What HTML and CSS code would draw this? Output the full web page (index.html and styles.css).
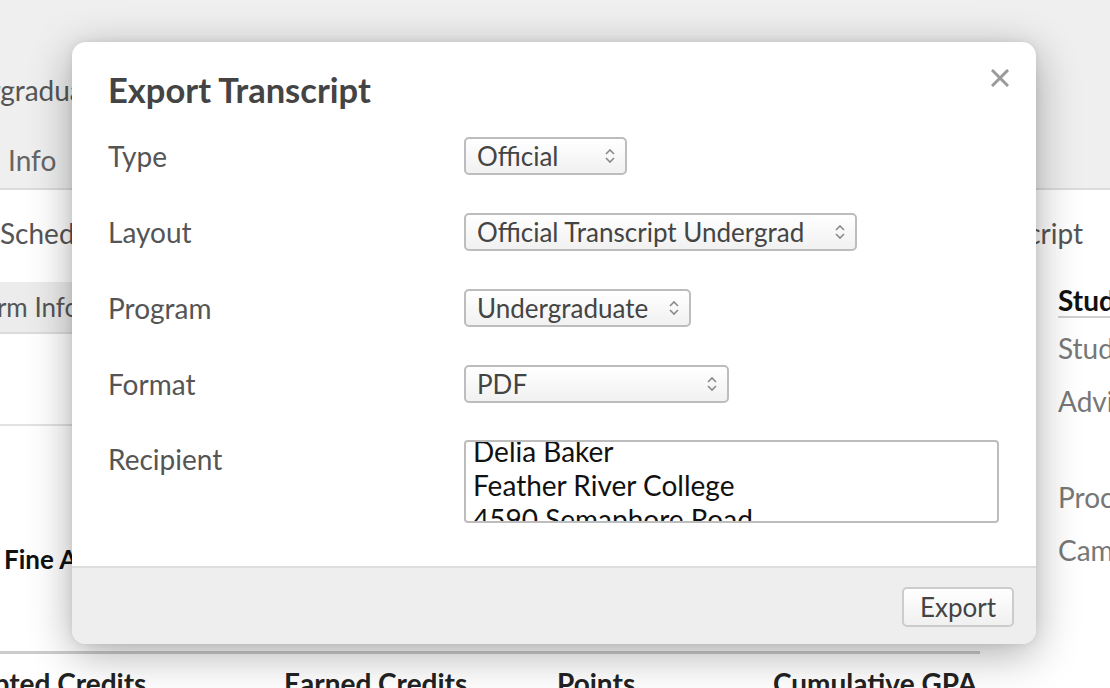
FILE: index.html
```html
<!DOCTYPE html>
<html>
<head>
<meta charset="utf-8">
<link rel="stylesheet" href="styles.css">
</head>
<body>
<div class="page">
  <header class="topbar">
    <div class="program-name">Undergraduate Program</div>
    <nav class="tabs"><span class="tab">Info</span></nav>
  </header>
  <nav class="subnav">
    <span class="subnav-item">Schedule</span>
    <span class="subnav-item">Transcript</span>
  </nav>
  <div class="content">
    <main class="main">
      <div class="term-strip"><span class="term-label">Term Info</span></div>
      <div class="term-body"></div>
      <div class="course">
        <h3 class="course-title">Fine Arts</h3>
      </div>
      <div class="stats">
        <span class="stat stat-first">Attempted Credits</span>
        <span class="stat stat-earned">Earned Credits</span>
        <span class="stat stat-points">Points</span>
        <span class="stat stat-gpa">Cumulative GPA</span>
      </div>
    </main>
    <aside class="sidebar">
      <h3 class="side-heading">Student</h3>
      <div class="side-row">Student ID</div>
      <div class="side-row">Advisor</div>
      <div class="side-row side-gap">Process Date</div>
      <div class="side-row">Campus</div>
    </aside>
  </div>

  <div class="modal">
    <div class="modal-body">
      <button class="close" aria-label="Close">
        <svg width="18" height="18" viewBox="0 0 18 18"><path d="M2 2 L16 16 M16 2 L2 16" stroke="#9a9a9a" stroke-width="3" stroke-linecap="square"/></svg>
      </button>
      <h2 class="modal-title">Export Transcript</h2>
      <div class="form">
        <div class="form-row">
          <label class="form-label">Type</label>
          <div class="select w-type"><span>Official</span><svg class="chev" width="12" height="20" viewBox="0 0 12 20"><path d="M2 8 L6 4 L10 8 M2 12 L6 16 L10 12" fill="none" stroke="#8a8a8a" stroke-width="1.6"/></svg></div>
        </div>
        <div class="form-row">
          <label class="form-label">Layout</label>
          <div class="select w-layout"><span>Official Transcript Undergrad</span><svg class="chev" width="12" height="20" viewBox="0 0 12 20"><path d="M2 8 L6 4 L10 8 M2 12 L6 16 L10 12" fill="none" stroke="#8a8a8a" stroke-width="1.6"/></svg></div>
        </div>
        <div class="form-row">
          <label class="form-label">Program</label>
          <div class="select w-program"><span>Undergraduate</span><svg class="chev" width="12" height="20" viewBox="0 0 12 20"><path d="M2 8 L6 4 L10 8 M2 12 L6 16 L10 12" fill="none" stroke="#8a8a8a" stroke-width="1.6"/></svg></div>
        </div>
        <div class="form-row">
          <label class="form-label">Format</label>
          <div class="select w-format"><span>PDF</span><svg class="chev" width="12" height="20" viewBox="0 0 12 20"><path d="M2 8 L6 4 L10 8 M2 12 L6 16 L10 12" fill="none" stroke="#8a8a8a" stroke-width="1.6"/></svg></div>
        </div>
        <div class="form-row form-row-top">
          <label class="form-label label-recipient">Recipient</label>
          <div class="textarea">
            <div class="textarea-inner">
              <div>Delia Baker</div>
              <div>Feather River College</div>
              <div>4590 Semaphore Road</div>
              <div>Quincy, CA 95971</div>
            </div>
          </div>
        </div>
      </div>
    </div>
    <div class="modal-footer">
      <button class="btn">Export</button>
    </div>
  </div>
</div>
</body>
</html>
```

FILE: styles.css
```css
* { box-sizing: border-box; }
html, body { margin: 0; padding: 0; }
body {
  font-family: Lato, "Open Sans", "Liberation Sans", sans-serif;
  background: #fff;
  color: #555;
}
.page {
  position: relative;
  width: 1110px;
  height: 688px;
  overflow: hidden;
  background: #fff;
}

/* background page */
.topbar {
  height: 190px;
  background: #efefef;
  border-bottom: 2px solid #dcdcdc;
  display: flex;
  flex-direction: column;
}
.program-name {
  font-size: 28px;
  line-height: 32px;
  color: #555;
  margin-top: 74px;
  margin-left: -76px;
  white-space: nowrap;
}
.tabs {
  display: flex;
  margin-top: 38px;
}
.tab {
  font-size: 28px;
  line-height: 32px;
  color: #666;
  padding-left: 8px;
}
.subnav {
  height: 92px;
  display: flex;
  justify-content: space-between;
  padding-top: 27px;
  padding-right: 27px;
}
.subnav-item {
  font-size: 28px;
  line-height: 32px;
  color: #555;
  white-space: nowrap;
}
.content {
  display: grid;
  grid-template-columns: 980px 1fr;
  column-gap: 78px;
}
.term-strip {
  height: 52px;
  background: #ececec;
  border-bottom: 2px solid #dcdcdc;
  overflow: hidden;
}
.term-label {
  display: block;
  font-size: 26px;
  line-height: 50px;
  color: #555;
  margin-left: -29px;
  white-space: nowrap;
}
.term-body {
  height: 92px;
  border-bottom: 2px solid #e2e2e2;
}
.course {
  height: 228px;
  border-bottom: 3px solid #cccccc;
  padding-top: 118px;
}
.course-title {
  margin: 0;
  font-size: 26px;
  line-height: 30px;
  font-weight: 700;
  color: #111;
  padding-left: 4px;
}
.stats {
  display: flex;
  padding-top: 14px;
  white-space: nowrap;
}
.stat {
  font-size: 28px;
  line-height: 30px;
  font-weight: 700;
  color: #222;
}
.stat-first { margin-left: -83px; width: 367px; }
.stat-earned { width: 273px; }
.stat-points { width: 216px; }

.sidebar {
  padding-top: 2px;
  white-space: nowrap;
}
.side-heading {
  margin: 0;
  font-size: 28px;
  line-height: 32px;
  font-weight: 700;
  color: #111;
  padding-bottom: 0;
  border-bottom: 2px solid #d0d0d0;
}
.side-row {
  font-size: 28px;
  line-height: 32px;
  color: #777;
  margin-top: 14px;
}
.side-row + .side-row { margin-top: 21px; }
.side-row.side-gap { margin-top: 64px; }

/* modal */
.modal {
  position: absolute;
  left: 72px;
  top: 42px;
  width: 964px;
  height: 602px;
  background: #fff;
  border-radius: 14px;
  box-shadow: 0 10px 44px rgba(0,0,0,0.32), 0 0 8px rgba(0,0,0,0.08);
  display: flex;
  flex-direction: column;
  overflow: hidden;
}
.modal-body {
  position: relative;
  flex: 1;
  padding: 30px 36px 0 36px;
}
.close {
  position: absolute;
  top: 26px;
  right: 26px;
  width: 20px;
  height: 20px;
  padding: 0;
  border: 0;
  background: none;
  display: flex;
  align-items: center;
  justify-content: center;
}
.modal-title {
  margin: 0;
  font-size: 34.5px;
  line-height: 36px;
  font-weight: 700;
  color: #444;
}
.form {
  margin-top: 29px;
  display: flex;
  flex-direction: column;
  gap: 38px;
}
.form-row {
  display: flex;
  align-items: center;
  height: 38px;
}
.form-row-top {
  align-items: flex-start;
  height: auto;
  margin-top: -1px;
}
.form-label {
  width: 356px;
  flex: none;
  font-size: 28px;
  line-height: 32px;
  color: #555;
}
.label-recipient { margin-top: 3px; }
.select {
  height: 38px;
  border: 2px solid #bdbdbd;
  border-radius: 5px;
  background: linear-gradient(#ffffff, #f1f1f1);
  display: flex;
  align-items: center;
  justify-content: space-between;
  padding: 0 9px 0 11px;
  font-size: 26px;
  color: #444;
  white-space: nowrap;
}
.chev { flex: none; }
.w-type { width: 163px; }
.w-layout { width: 393px; }
.w-program { width: 227px; }
.w-format { width: 265px; }
.textarea {
  width: 535px;
  height: 83px;
  border: 2px solid #bdbdbd;
  border-radius: 4px;
  overflow: hidden;
  padding-left: 7px;
}
.textarea-inner {
  margin-top: -8px;
  font-size: 28px;
  line-height: 34px;
  color: #111;
}
.modal-footer {
  height: 78px;
  flex: none;
  background: #eeeeee;
  border-top: 2px solid #dddddd;
  display: flex;
  justify-content: flex-end;
  align-items: flex-start;
  padding: 19px 22px 0 0;
}
.btn {
  width: 112px;
  height: 40px;
  border: 2px solid #cccccc;
  border-radius: 5px;
  background: linear-gradient(#ffffff, #f0f0f0);
  font-family: Lato, "Open Sans", "Liberation Sans", sans-serif;
  font-size: 26px;
  color: #444;
  padding: 0;
}
```
